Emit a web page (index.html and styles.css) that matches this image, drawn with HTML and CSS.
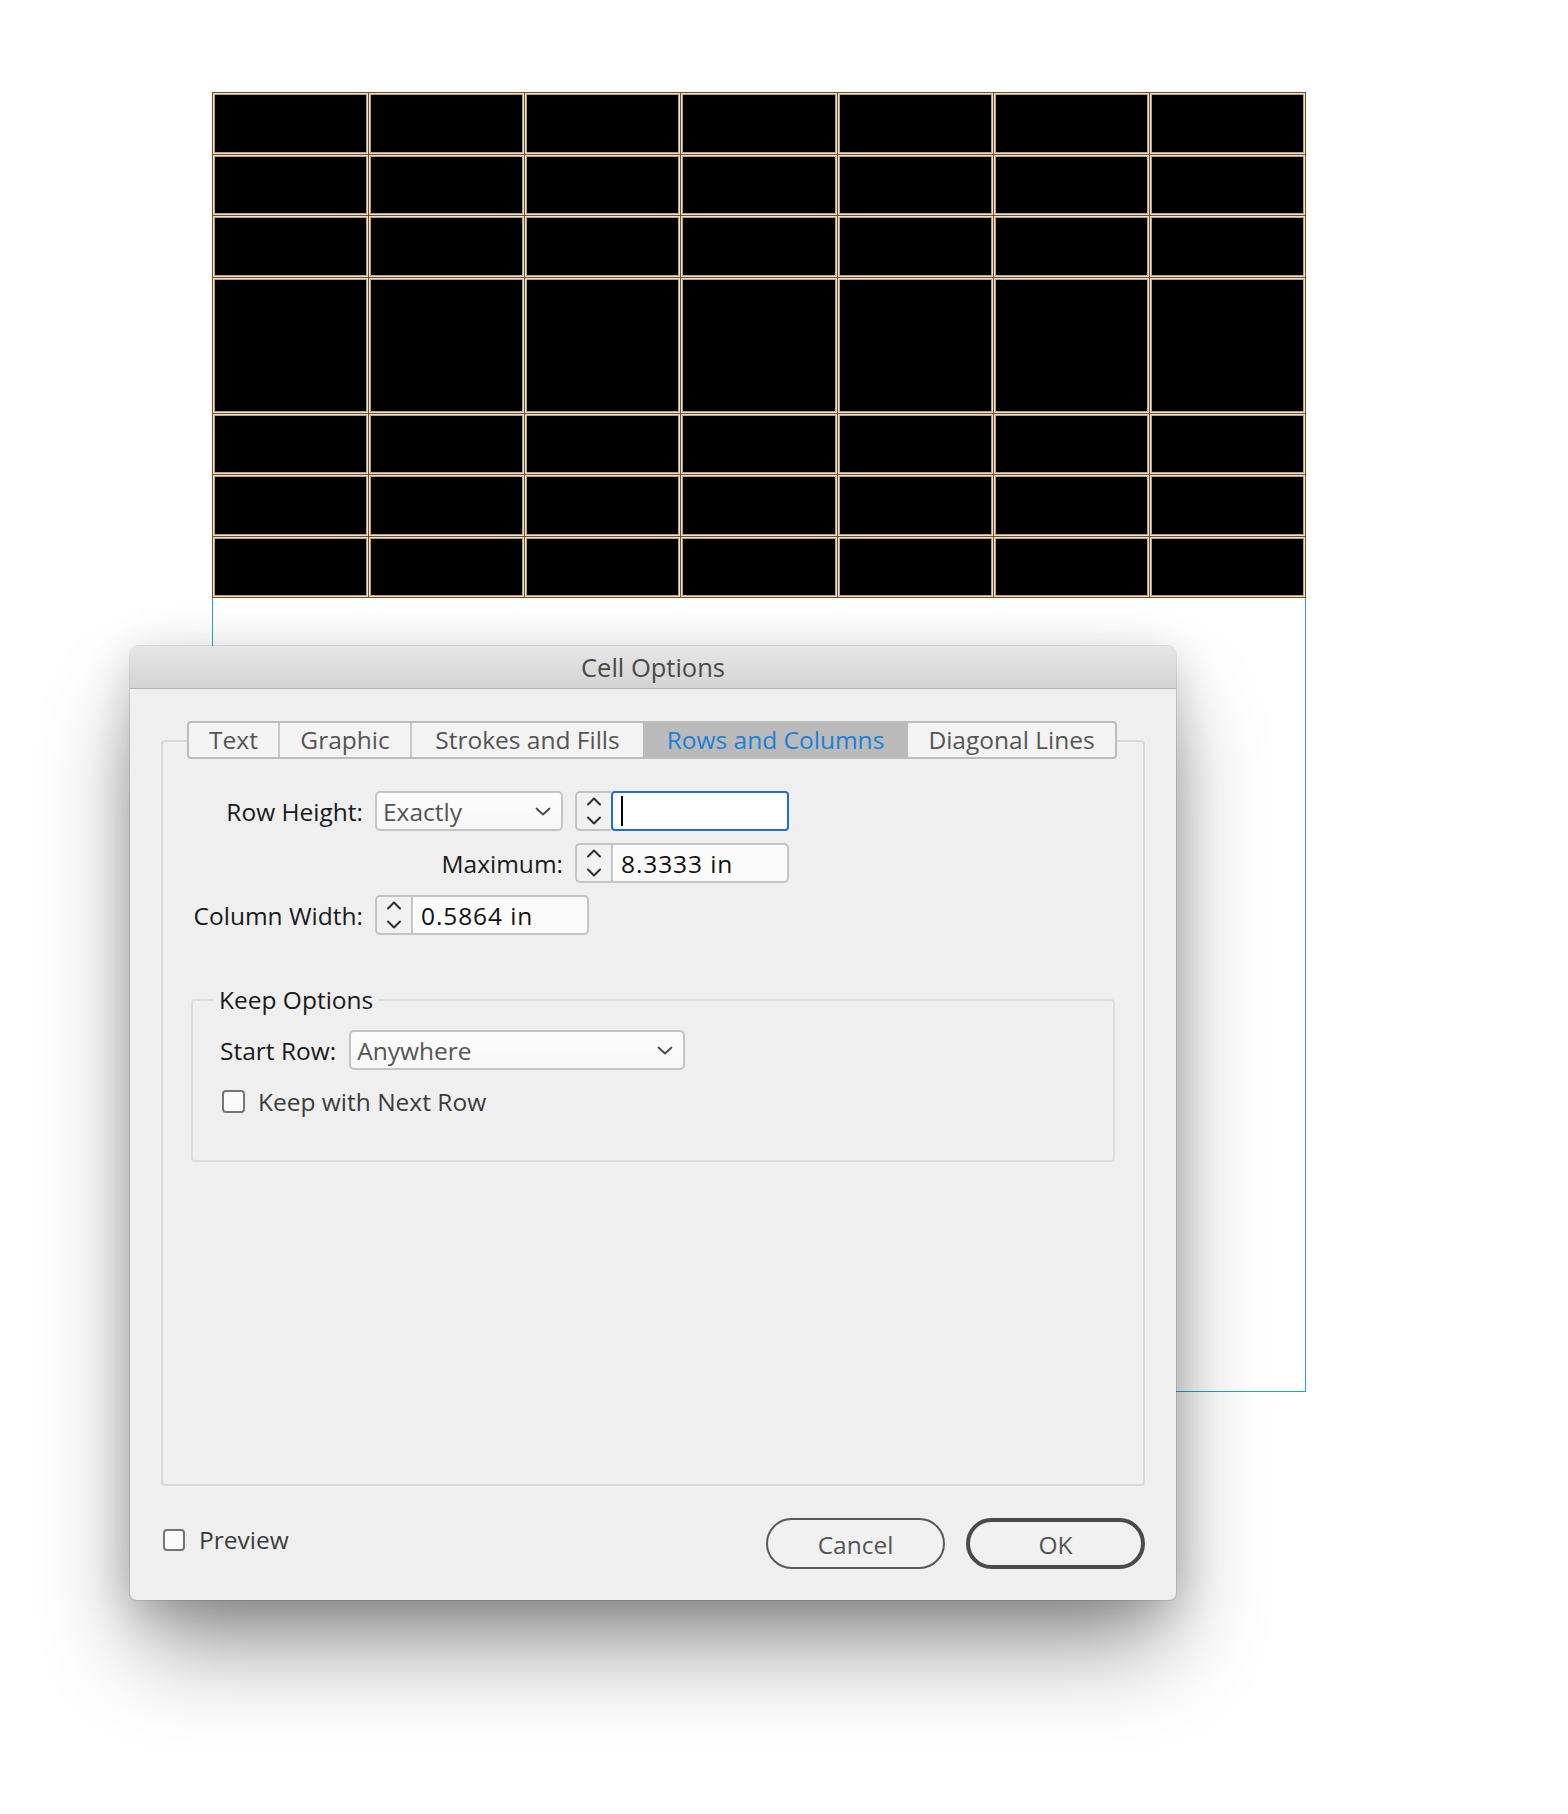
FILE: index.html
```html
<!DOCTYPE html>
<html>
<head>
<meta charset="utf-8">
<title>Cell Options</title>
<link rel="stylesheet" href="styles.css">
</head>
<body>
<div class="stage">
  <div class="spread">
    <div class="table">
      <div class="cell"></div><div class="cell"></div><div class="cell"></div><div class="cell"></div><div class="cell"></div><div class="cell"></div><div class="cell"></div>
      <div class="cell"></div><div class="cell"></div><div class="cell"></div><div class="cell"></div><div class="cell"></div><div class="cell"></div><div class="cell"></div>
      <div class="cell"></div><div class="cell"></div><div class="cell"></div><div class="cell"></div><div class="cell"></div><div class="cell"></div><div class="cell"></div>
      <div class="cell"></div><div class="cell"></div><div class="cell"></div><div class="cell"></div><div class="cell"></div><div class="cell"></div><div class="cell"></div>
      <div class="cell"></div><div class="cell"></div><div class="cell"></div><div class="cell"></div><div class="cell"></div><div class="cell"></div><div class="cell"></div>
      <div class="cell"></div><div class="cell"></div><div class="cell"></div><div class="cell"></div><div class="cell"></div><div class="cell"></div><div class="cell"></div>
      <div class="cell"></div><div class="cell"></div><div class="cell"></div><div class="cell"></div><div class="cell"></div><div class="cell"></div><div class="cell"></div>
    </div>
    <div class="frame"></div>
  </div>

  <div class="dialog">
    <div class="titlebar">Cell Options</div>
    <div class="dialog-body">
      <div class="tabs">
        <div class="tab tab-text">Text</div>
        <div class="tab tab-graphic">Graphic</div>
        <div class="tab tab-strokes">Strokes and Fills</div>
        <div class="tab tab-rows active">Rows and Columns</div>
        <div class="tab tab-diag">Diagonal Lines</div>
      </div>
      <div class="panel">
        <div class="form">
          <div class="label row1">Row Height:</div>
          <div class="select sel-row row1">
            <span>Exactly</span>
            <svg class="chev" width="16" height="9" viewBox="0 0 16 9"><polyline points="1.5,1.5 8,7.5 14.5,1.5"/></svg>
          </div>
          <div class="spin row1">
            <div class="stepper"><svg width="16" height="36" viewBox="0 0 16 36"><polyline points="2,11.5 8,5.5 14,11.5"/><polyline points="2,24.5 8,30.5 14,24.5"/></svg></div>
            <div class="field focused"><span class="caret"></span></div>
          </div>

          <div class="label row2 max">Maximum:</div>
          <div class="spin row2">
            <div class="stepper"><svg width="16" height="36" viewBox="0 0 16 36"><polyline points="2,11.5 8,5.5 14,11.5"/><polyline points="2,24.5 8,30.5 14,24.5"/></svg></div>
            <div class="field">8.3333 in</div>
          </div>

          <div class="label row3">Column Width:</div>
          <div class="spin row3 colw">
            <div class="stepper"><svg width="16" height="36" viewBox="0 0 16 36"><polyline points="2,11.5 8,5.5 14,11.5"/><polyline points="2,24.5 8,30.5 14,24.5"/></svg></div>
            <div class="field">0.5864 in</div>
          </div>
        </div>

        <fieldset class="group">
          <legend>Keep Options</legend>
          <div class="start-row">
            <span class="label-inline">Start Row:</span>
            <div class="select sel-start">
              <span>Anywhere</span>
              <svg class="chev" width="16" height="9" viewBox="0 0 16 9"><polyline points="1.5,1.5 8,7.5 14.5,1.5"/></svg>
            </div>
          </div>
          <div class="check-row">
            <span class="checkbox"></span>
            <span class="check-label">Keep with Next Row</span>
          </div>
        </fieldset>
      </div>

      <div class="footer">
        <div class="preview">
          <span class="checkbox small"></span>
          <span class="check-label">Preview</span>
        </div>
        <div class="buttons">
          <div class="btn">Cancel</div>
          <div class="btn default">OK</div>
        </div>
      </div>
    </div>
  </div>
</div>
</body>
</html>
```

FILE: styles.css
```css
* { box-sizing: border-box; }

html, body {
  margin: 0;
  padding: 0;
  background: #ffffff;
}

body {
  font-family: "Open Sans", "DejaVu Sans", sans-serif;
  font-size: 24.5px;
  color: #1b1b1b;
}

.stage {
  position: relative;
  width: 1568px;
  height: 1814px;
  padding: 92px 0 0 212px;
  overflow: hidden;
}

.spread {
  width: 1094px;
}

.table {
  display: grid;
  grid-template-columns: repeat(7, 1fr);
  grid-template-rows: 61px 60px 61px 135px 60px 61px 60px;
  gap: 1px;
  padding: 1px;
  background: #7d4a16;
}

.cell {
  background: #000;
  border: 1px solid #efe3ca;
  box-shadow: inset 0 0 0 1px #a8a398;
}

.frame {
  height: 794px;
  border: 1px solid #2a9fd6;
  border-top: 0;
}

/* Dialog */
.dialog {
  position: absolute;
  left: 130px;
  top: 646px;
  width: 1046px;
  height: 954px;
  background: #efefef;
  border-radius: 9px 9px 7px 7px;
  box-shadow:
    0 0 0 1px rgba(0, 0, 0, 0.10),
    0 55px 90px -10px rgba(0, 0, 0, 0.42),
    0 10px 45px rgba(0, 0, 0, 0.18);
}

.titlebar {
  height: 43px;
  line-height: 42px;
  text-align: center;
  font-size: 25.5px;
  color: #4a4a4a;
  background: linear-gradient(#e6e6e6, #d3d3d3);
  border-bottom: 1px solid #b3b3b3;
  border-radius: 9px 9px 0 0;
}

.dialog-body {
  padding: 32px 31px 0;
}

.tabs {
  position: relative;
  z-index: 1;
  display: flex;
  margin-left: 26px;
  width: max-content;
  height: 38px;
  border: 2px solid #bcbcbc;
  border-radius: 4px;
  background: #f3f3f3;
  overflow: hidden;
}

.tab {
  line-height: 34px;
  text-align: center;
  color: #555555;
  border-left: 2px solid #c8c8c8;
  white-space: nowrap;
}

.tab-text { width: 89px; border-left: 0; }
.tab-graphic { width: 132px; }
.tab-strokes { width: 233px; }
.tab-rows { width: 263px; }
.tab-diag { width: 209px; }

.tab.active {
  background: #bababa;
  color: #1c80d6;
  border-left-color: #bababa;
}

.tab.active + .tab { border-left-color: #bababa; }

.panel {
  margin-top: -19px;
  height: 746px;
  border: 2px solid #d9d9d9;
  border-radius: 4px;
  padding-top: 49px;
}

.form {
  display: grid;
  grid-template-columns: 200px 188px 214px;
  grid-template-rows: 40px 40px 40px;
  column-gap: 12px;
  row-gap: 12px;
}

.label {
  align-self: center;
  text-align: right;
  white-space: nowrap;
  color: #1a1a1a;
}

.row1 { grid-row: 1; }
.row2 { grid-row: 2; }
.row3 { grid-row: 3; }

.label.row1, .label.row3 { grid-column: 1; }
.label.max { grid-column: 2; }
.sel-row { grid-column: 2; }
.spin.row1, .spin.row2 { grid-column: 3; }
.spin.colw { grid-column: 2 / span 2; width: 214px; }

.select {
  display: flex;
  align-items: center;
  height: 40px;
  padding: 0 10px 0 6px;
  border: 2px solid #c4c4c4;
  border-radius: 5px;
  background: linear-gradient(#fdfdfd, #f7f7f7);
  color: #555555;
}

.select .chev { margin-left: auto; }

.chev polyline, .stepper polyline {
  fill: none;
  stroke: #474747;
  stroke-width: 1.8;
  stroke-linecap: round;
  stroke-linejoin: round;
}

.spin {
  display: flex;
  height: 40px;
}

.stepper {
  width: 36px;
  display: flex;
  align-items: center;
  justify-content: center;
  border: 2px solid #c4c4c4;
  border-right: 0;
  border-radius: 5px 0 0 5px;
  background: #f1f1f1;
}

.stepper polyline { stroke: #2e2e2e; stroke-width: 2; }

.field {
  flex: 1;
  display: flex;
  align-items: center;
  padding-left: 8px;
  border: 2px solid #c4c4c4;
  border-radius: 0 5px 5px 0;
  background: #fbfbfb;
  color: #111111;
  letter-spacing: 0.9px;
}

.field.focused {
  border-color: #1e6fd5;
  border-radius: 4px;
  background: #ffffff;
}

.caret {
  display: block;
  width: 2px;
  height: 30px;
  background: #000;
}

/* Keep Options */
.group {
  margin: 48px 28px 0;
  height: 179px;
  padding: 0 0 0 27px;
  border: 2px solid #dcdcdc;
  border-radius: 4px;
}

.group legend {
  padding: 0 6px;
  margin-left: -7px;
  line-height: 34px;
  color: #1a1a1a;
}

.start-row {
  display: flex;
  align-items: center;
  margin-top: 13px;
  height: 40px;
}

.label-inline {
  color: #1a1a1a;
  margin-right: 13px;
  white-space: nowrap;
}

.sel-start {
  width: 336px;
}

.check-row {
  display: flex;
  align-items: center;
  height: 30px;
  margin-top: 16px;
  margin-left: 2px;
}

.checkbox {
  display: block;
  width: 23px;
  height: 23px;
  border: 2px solid #747474;
  border-radius: 4px;
  background: #fafafa;
  margin-right: 13px;
  flex: none;
}

.check-label { color: #3c3c3c; }

/* Footer */
.footer {
  display: flex;
  align-items: center;
  justify-content: space-between;
  margin-top: 32px;
  height: 51px;
}

.preview {
  display: flex;
  align-items: center;
  margin-left: 2px;
  margin-bottom: 8px;
}

.checkbox.small {
  width: 22px;
  height: 22px;
  margin-right: 14px;
}

.buttons {
  display: flex;
  gap: 21px;
}

.btn {
  width: 179px;
  height: 51px;
  display: flex;
  align-items: center;
  justify-content: center;
  border: 2px solid #595959;
  border-radius: 26px;
  background: #f1f1f1;
  color: #555555;
  padding-top: 2px;
}

.btn.default {
  border: 4px solid #4a4a4a;
}
```
